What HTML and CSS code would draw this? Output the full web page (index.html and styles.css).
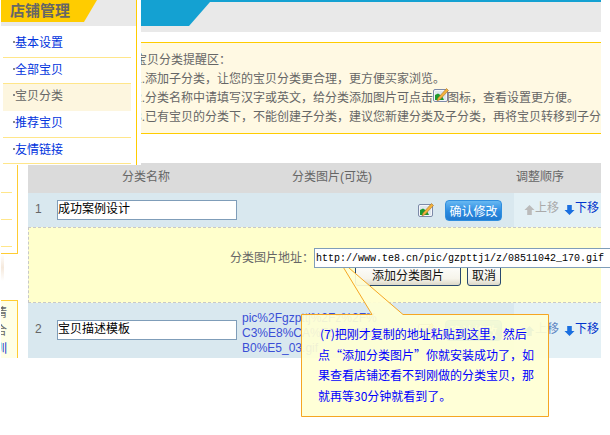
FILE: index.html
```html
<!DOCTYPE html>
<html lang="zh-CN">
<head>
<meta charset="utf-8">
<title>宝贝分类</title>
<link rel="stylesheet" href="styles.css">
</head>
<body>
<svg class="defs" width="0" height="0" aria-hidden="true">
  <symbol id="pic" viewBox="0 0 16 15">
    <rect x="0.5" y="1.5" width="14" height="12" rx="1.5" fill="#f4f6fa" stroke="#7d8aa8"/>
    <rect x="2" y="3" width="11" height="9" fill="#dfe7ee"/>
    <path d="M2 12V7l3-1.5 4 2.5 2 4z" fill="#1f9a2e"/>
    <path d="M13.5 .5l2 2L7 11.5 4 13l1-3z" fill="#f3b23c" stroke="#a8742a" stroke-width=".6"/>
  </symbol>
  <symbol id="arrow-up" viewBox="0 0 12 12">
    <path d="M6 .5L11.5 6H8.5v5.5h-5V6H.5z"/>
  </symbol>
  <symbol id="arrow-down" viewBox="0 0 12 12">
    <path d="M3.5 .5h5V6h3L6 11.5.5 6h3z"/>
  </symbol>
</svg>

<div class="frag frag-list"><i></i><i></i><i></i></div>
<div class="frag frag-glow"></div>
<div class="frag frag-tip">
  <span>情</span><span>合</span><span class="frag-link">训</span>
</div>

<main class="main">
  <div class="topbar"><div class="topbar-blue"></div></div>

  <section class="notice">
    <p>宝贝分类提醒区：</p>
    <p>1.添加子分类，让您的宝贝分类更合理，更方便买家浏览。</p>
    <p>2.分类名称中请填写汉字或英文，给分类添加图片可点击<svg class="pic-icon inline"><use href="#pic"/></svg>图标，查看设置更方便。</p>
    <p>3.已有宝贝的分类下，不能创建子分类，建议您新建分类及子分类，再将宝贝转移到子分类下。</p>
  </section>

  <section class="table">
    <div class="thead">
      <div class="th-name">分类名称</div>
      <div class="th-pic">分类图片(可选)</div>
      <div class="th-order">调整顺序</div>
    </div>

    <div class="row row-one">
      <div class="num">1</div>
      <input class="name-input" type="text" value="成功案例设计">
      <div class="pics">
        <svg class="pic-icon"><use href="#pic"/></svg>
        <button class="confirm" type="button">确认修改</button>
      </div>
      <div class="order">
        <span class="move off"><svg class="arrow"><use href="#arrow-up"/></svg>上移</span>
        <a class="move"><svg class="arrow"><use href="#arrow-down"/></svg>下移</a>
      </div>
    </div>

    <div class="panel">
      <div class="panel-url">
        <label class="url-label">分类图片地址：</label>
        <input class="url-input" type="text" value="http://www.te8.cn/pic/gzpttj1/z/08511042_170.gif">
      </div>
      <div class="panel-buttons">
        <button class="xp add" type="button">添加分类图片</button>
        <button class="xp cancel" type="button">取消</button>
      </div>
    </div>

    <div class="row row-two">
      <div class="num">2</div>
      <input class="name-input" type="text" value="宝贝描述模板">
      <div class="pics">
        <a class="pic-link">pic%2Fgzpttj%2Fz%2F%<br>C3%E8%CA%F6%C4%A3%<br>B0%E5_03.gif</a>
        <svg class="pic-icon"><use href="#pic"/></svg>
        <button class="confirm" type="button">确认修改</button>
      </div>
      <div class="order">
        <a class="move up-two"><svg class="arrow"><use href="#arrow-up"/></svg>上移</a>
        <a class="move"><svg class="arrow"><use href="#arrow-down"/></svg>下移</a>
      </div>
    </div>
  </section>
</main>

<nav class="menu">
  <div class="menu-inner">
    <div class="menu-head"><h2 class="menu-title">店铺管理</h2></div>
    <ul class="menu-list">
      <li class="menu-item"><a>基本设置</a></li>
      <li class="menu-item"><a>全部宝贝</a></li>
      <li class="menu-item current"><a>宝贝分类</a></li>
      <li class="menu-item"><a>推荐宝贝</a></li>
      <li class="menu-item"><a>友情链接</a></li>
    </ul>
  </div>
</nav>

<aside class="callout">
  <svg class="callout-shape" width="260" height="170" viewBox="0 0 260 170">
    <path d="M.5 56.5H71L37 .5 102 56.5H247.5V158.5H.5Z"/>
  </svg>
  <p class="callout-text"><span class="first">(7)把刚才复制的地址粘贴到这里，然后</span><br>点“添加分类图片”你就安装成功了，如<br>果查看店铺还看不到刚做的分类宝贝，那<br>就再等30分钟就看到了。</p>
</aside>
</body>
</html>
```
FILE: styles.css
```css
* { box-sizing: border-box; }
html, body { margin: 0; padding: 0; }
body {
  width: 610px;
  height: 435px;
  overflow: hidden;
  position: relative;
  background: #fff;
  color: #666;
  font: 12px/19px "Liberation Sans", "Noto Sans CJK SC", sans-serif;
}
.defs { position: absolute; }
p, h2, ul { margin: 0; padding: 0; }
ul { list-style: none; }

/* main column */
.main { width: 573px; margin-left: 28px; }
.topbar {
  height: 32px;
  background: #e9e9e9;
  border-top: 2px solid #14a1d2;
}
.topbar-blue {
  width: 182px;
  height: 24px;
  background: #14a1d2;
  clip-path: polygon(0 0, 100% 0, 161px 100%, 0 100%);
}

.notice {
  margin-top: 10px;
  height: 92px;
  padding: 8px 0 6px 107px;
  background: #fff9e3;
  border-top: 1px solid #fc0;
  border-bottom: 1px solid #fc0;
  white-space: nowrap;
  overflow: hidden;
}
.pic-icon { width: 16px; height: 15px; flex: none; }
.pic-icon.inline { vertical-align: -1px; margin: -4px -2px 0 0; }

.table { margin-top: 29px; }
.thead {
  display: flex;
  height: 30px;
  line-height: 29px;
  background: #dbdbdb;
}
.th-name { width: 236px; text-align: center; }
.th-pic { width: 136px; text-align: center; margin-right: auto; white-space: nowrap; word-spacing: 0; }
.th-order { width: 87px; padding-left: 2px; }

.row { display: flex; background: #d9e8ef; }
.row-one { height: 34px; }
.row-two { height: 55px; }
.num { width: 29px; padding: 7px 0 0 7px; }
.row-two .num { padding-top: 17px; }
.name-input {
  width: 180px;
  height: 20px;
  margin: 7px 0 0;
  padding: 0 0 5px;
  border: 1px solid #7f9db9;
  background: #fff;
  color: #000;
  font: 12px/14px "Liberation Sans", "Noto Sans CJK SC", sans-serif;
}
.row-two .name-input { margin-top: 17px; }
.pics {
  flex: 1;
  display: flex;
  align-items: center;
  justify-content: flex-end;
  gap: 11px;
  padding-right: 12px;
}
.pic-link {
  margin: 5px auto 0 5px;
  color: #3a4fd6;
  font-size: 12px;
  line-height: 15px;
  white-space: nowrap;
}
.confirm {
  width: 57px;
  height: 21px;
  padding: 0;
  border: 1px solid #2f8ede;
  border-radius: 4px;
  background: linear-gradient(#67b8f2, #2b8ae0 55%, #2079cf);
  color: #fff;
  font: 12px/19px "Noto Sans CJK SC", sans-serif;
}
.order {
  width: 87px;
  background: #e3f0f5;
  display: flex;
  align-items: center;
  gap: 5px;
  padding-left: 10px;
  white-space: nowrap;
}
.row-one .order { padding-bottom: 3px; }
.row-two .order { padding-bottom: 2px; }
.move { color: #03c; display: flex; align-items: center; }
.move.off { color: #aaa; }
.move .arrow { color: #1a6fe0; }
.move.off .arrow { color: #bbb; }
.arrow { width: 11px; height: 12px; fill: currentColor; margin-top: 2px; }
.up-two { color: #5f86c4; }

.panel {
  height: 76px;
  background: #ffc;
  border: 1px dashed #c8c8c8;
  border-right: 0;
}
.panel-url {
  display: flex;
  align-items: center;
  padding: 20px 0 0 201px;
  white-space: nowrap;
}
.url-label { width: 84px; flex: none; }
.url-input {
  position: relative;
  z-index: 1;
  flex: none;
  width: 310px;
  height: 20px;
  padding: 0 1px;
  border: 1px solid #7f9db9;
  background: #fff;
  color: #000;
  font: 10px/16px "Liberation Mono", monospace;
}
.panel-buttons {
  display: flex;
  gap: 6px;
  margin-top: -5px;
  padding-left: 326px;
}
.xp {
  height: 23px;
  padding: 0;
  border: 1px solid #29496e;
  border-radius: 3px;
  background: linear-gradient(#fff, #f6f4ea 70%, #dcd8c8);
  color: #111;
  font: 12px/16px "Noto Sans CJK SC", sans-serif;
}
.add { width: 106px; }
.cancel { width: 34px; }

/* fragments of the covered page at the far left */
.frag { position: absolute; left: 1px; width: 17px; }
.frag-list {
  top: 165px;
  height: 89px;
  border-right: 1px solid #fc3;
  border-bottom: 1px solid #fc3;
  padding-top: 27px;
  display: flex;
  flex-direction: column;
  gap: 26px;
}
.frag-list i { display: block; width: 11px; height: 1px; background: #ffe68a; }
.frag-glow {
  top: 254px;
  width: 3px;
  height: 27px;
  background: linear-gradient(#fff, #f5e9dc 50%, #fff);
}
.frag-tip {
  top: 300px;
  height: 58px;
  background: #ffffe6;
  border-top: 1px solid #fc3;
  border-right: 1px solid #fc3;
  overflow: hidden;
  display: flex;
  flex-direction: column;
  padding-top: 3px;
  line-height: 18px;
}
.frag-tip span { margin-left: -6px; }
.frag-tip .frag-link { color: #03c; }

/* floating shop menu */
.menu {
  position: absolute;
  left: 0;
  top: 0;
  width: 141px;
  height: 165px;
  background: #fff;
  padding-left: 1px;
}
.menu-inner {
  width: 136px;
  height: 165px;
  border-right: 1px solid #fc0;
}
.menu-head {
  height: 26px;
  background: #e9e9e9;
}
.menu-title {
  width: 96px;
  height: 22px;
  padding-left: 9px;
  background: #fc0;
  clip-path: polygon(0 0, 100% 0, 83px 100%, 0 100%);
  color: #666;
  font: bold 15px/20px "Noto Sans CJK SC", sans-serif;
  white-space: nowrap;
}
.menu-list { padding: 5px 0 0 2px; }
.menu-item {
  width: 128px;
  height: 26.7px;
  border-bottom: 1px solid #ffe68a;
  padding-left: 12px;
  position: relative;
  white-space: nowrap;
}
.menu-item::before {
  content: "";
  position: absolute;
  left: 10px;
  top: 10px;
  width: 2px;
  height: 2px;
  background: #888;
}
.menu-item a { color: #03d; display: block; height: 25px; line-height: 24px; }
.menu-item.current { background: #fdf6df; border-bottom-color: transparent; }
.menu-item.current a { color: #666; }

/* speech bubble */
.callout {
  position: absolute;
  left: 301px;
  top: 258px;
  width: 260px;
  height: 170px;
}
.callout-shape { position: absolute; left: 0; top: 0; }
.callout-shape path {
  fill: rgba(255, 255, 212, .92);
  stroke: #f5a623;
  stroke-width: 1;
}
.callout-text {
  position: absolute;
  left: 17px;
  top: 66px;
  width: 225px;
  margin: 0;
  color: #00f;
  font-family: "Noto Sans CJK SC", sans-serif;
  line-height: 20.7px;
  white-space: nowrap;
}
.first { margin-left: 2px; }
```
